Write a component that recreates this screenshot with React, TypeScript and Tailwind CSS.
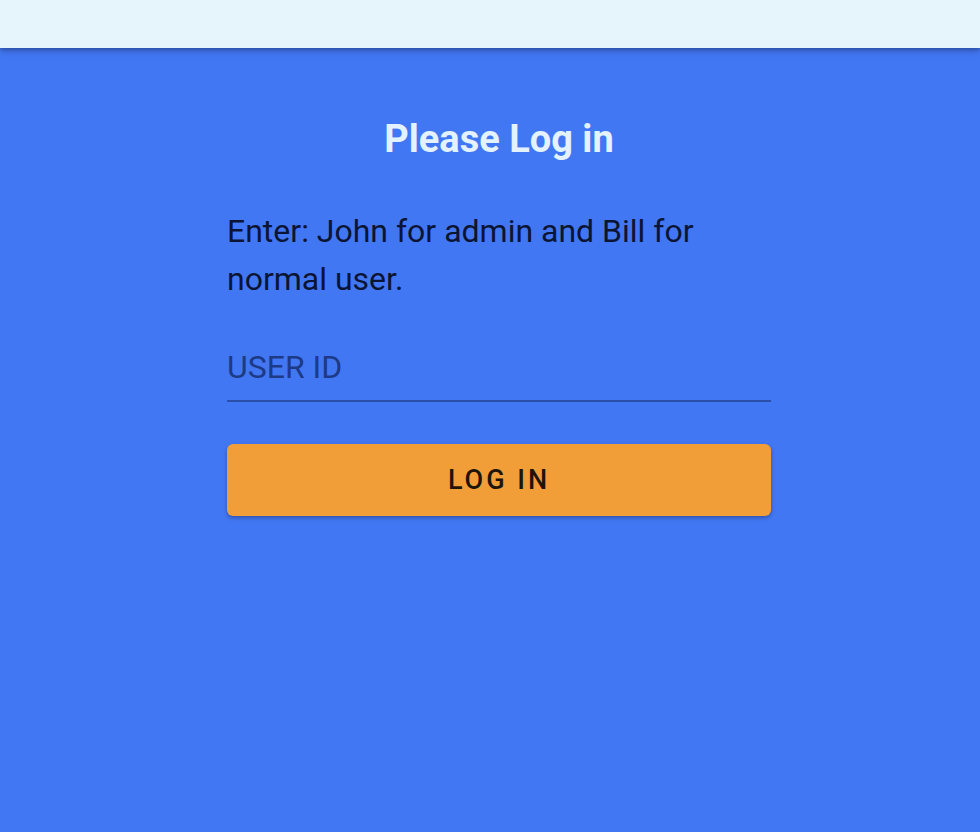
import React from "react";

export default function App() {
  return (
    <div className="h-[832px] w-full bg-[#4277f4] overflow-hidden" style={{ fontFamily: "Roboto, 'Noto Sans', sans-serif" }}>
      <header className="h-[48px] w-full bg-[#e6f4fc] relative z-10 shadow-[0_2px_4px_rgba(0,0,0,0.25),0_4px_8px_rgba(0,0,0,0.12)]" />
      <main className="ml-[227px] w-[544px] flex flex-col">
        <h1 className="mt-[69px] text-center text-[38px] leading-[44px] font-bold text-[#e3f2fd]">Please Log in</h1>
        <p className="mt-[46px] text-[32px] leading-[48px] text-[#0b1533]">
          Enter: John for admin and Bill for normal user.
        </p>
        <div className="mt-[44px] border-b-2 border-[#2a4fa8] pb-[13px]">
          <input
            placeholder="USER ID"
            className="w-full h-[40px] bg-transparent outline-none text-[32px] leading-[40px] text-[#0b1533] placeholder:text-[#1d3a86]"
          />
        </div>
        <button className="mt-[42px] h-[72px] w-full rounded-[6px] bg-[#f29e38] text-[27px] font-medium tracking-[3px] text-[#1f1408] shadow-[0_2px_4px_rgba(0,0,0,0.3)]">
          LOG IN
        </button>
      </main>
    </div>
  );
}
